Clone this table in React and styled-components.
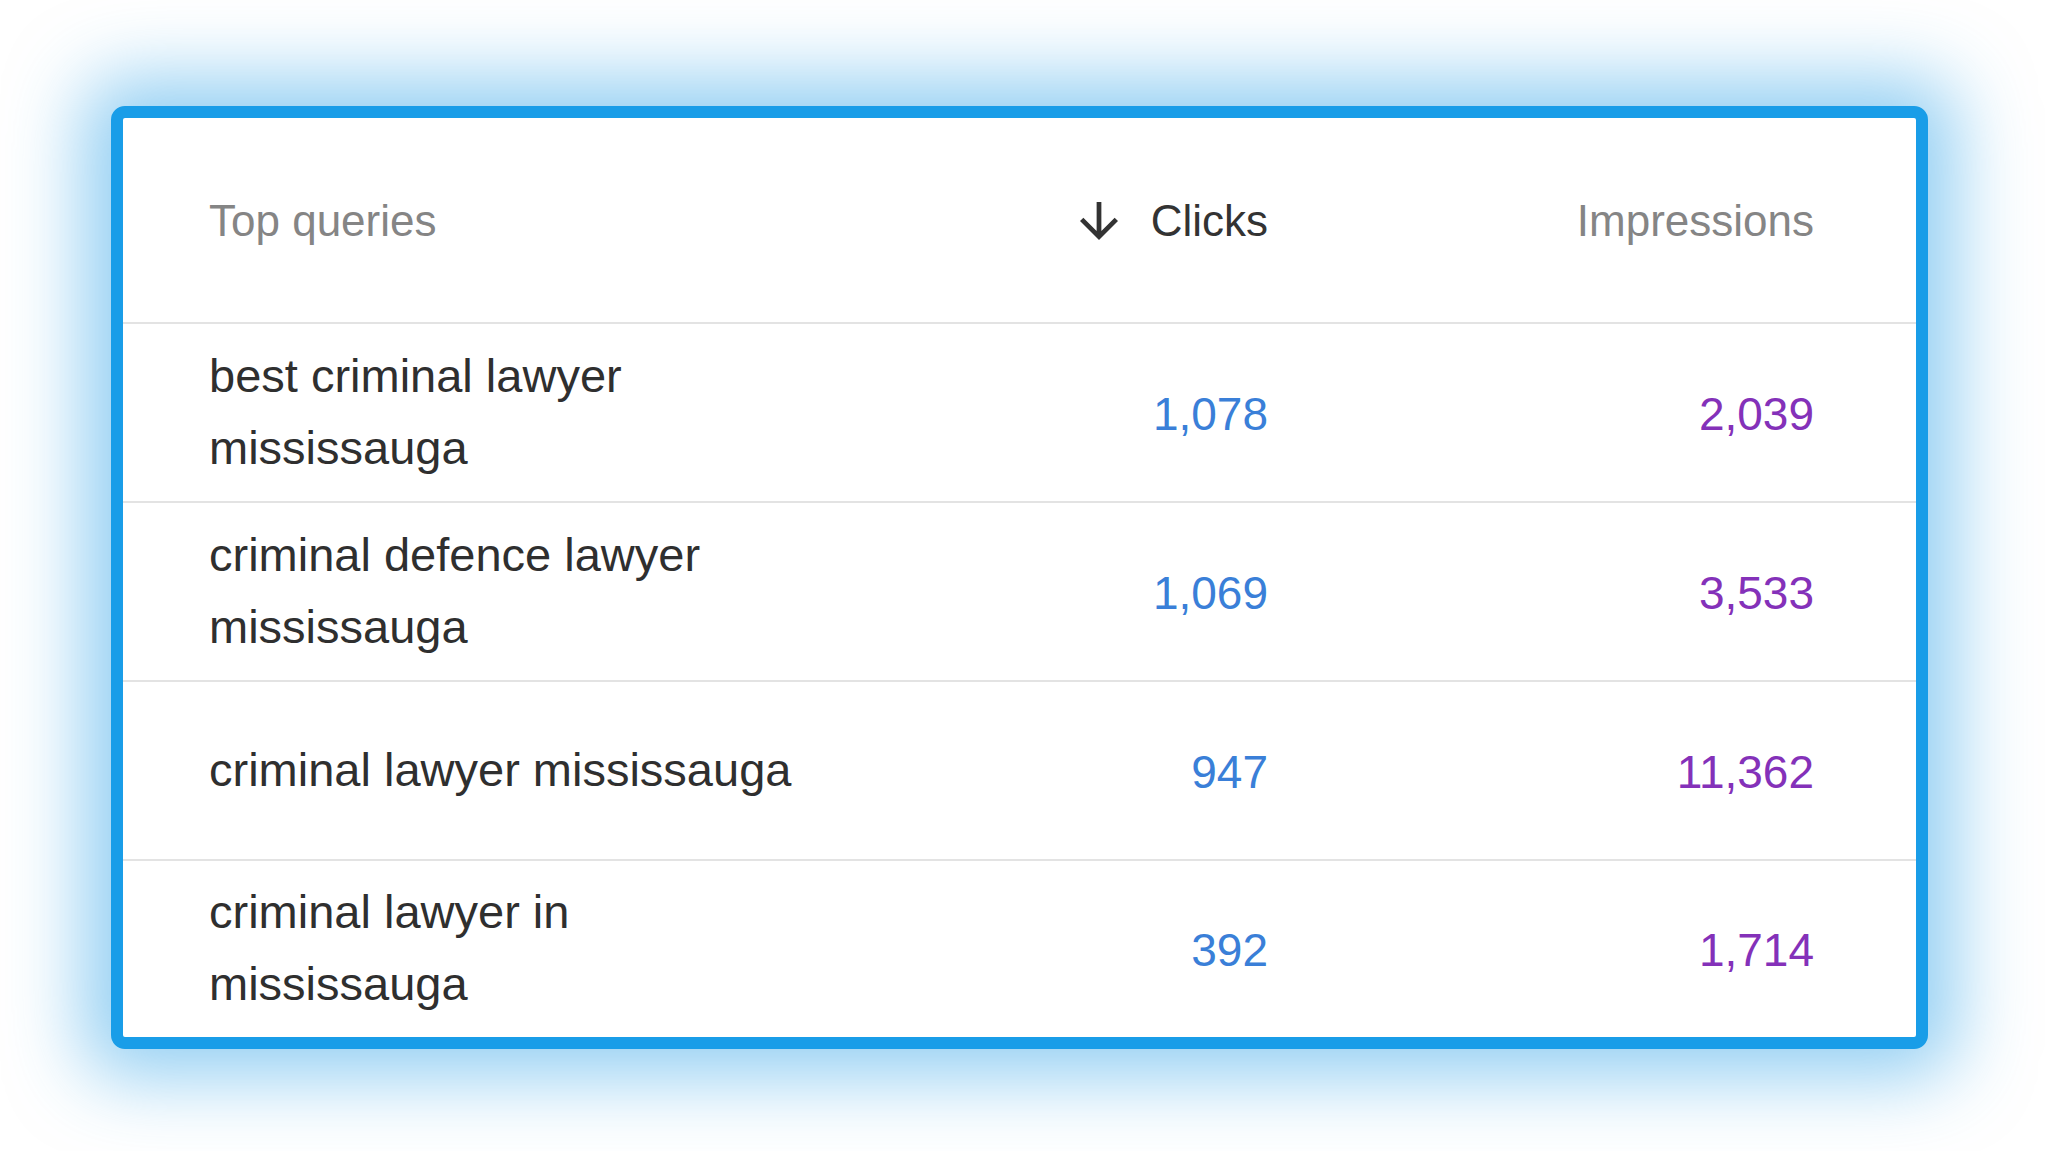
import React from "react";
import styled, { createGlobalStyle } from "styled-components";

const GlobalStyle = createGlobalStyle`
  html, body {
    margin: 0;
    padding: 0;
    background: #ffffff;
    font-family: "Liberation Sans", Arial, sans-serif;
  }
`;

const Page = styled.div`
  width: 2048px;
  height: 1151px;
  box-sizing: border-box;
  padding: 106px 120px 0 111px;
  background: #ffffff;
  overflow: hidden;
`;

const Card = styled.div`
  background: #ffffff;
  border: 12px solid #199de8;
  border-radius: 14px;
  box-shadow: 0 0 75px 28px rgba(40, 160, 232, 0.5);
  overflow: hidden;
`;

const Grid = styled.div`
  display: grid;
  grid-template-columns: 620px 1fr 546px;
  padding: 0 102px 0 86px;
`;

const HeaderRow = styled(Grid)`
  height: 204px;
  align-items: center;
  font-size: 44px;
  color: #858585;
`;

const HeadCell = styled.div`
  display: flex;
  align-items: center;
  justify-content: ${(p) => (p.$right ? "flex-end" : "flex-start")};
  gap: 33px;
  color: ${(p) => (p.$active ? "#333333" : "#858585")};
  padding-top: 2px;
`;

const Row = styled(Grid)`
  height: ${(p) => (p.$last ? "176px" : "177px")};
  border-top: 2px solid #e3e3e3;
  align-items: center;
`;

const Query = styled.div`
  font-size: 47px;
  line-height: 72px;
  color: #2f2f2f;
  padding-bottom: 2px;
`;

const Num = styled.div`
  text-align: right;
  font-size: 46px;
  color: ${(p) => (p.$kind === "clicks" ? "#3a7fd8" : "#8431b9")};
  padding-top: 2px;
`;

const SortArrow = () => (
  <svg width="38" height="39" viewBox="4 4 16 16.4" fill="#333333">
    <path d="M20 12l-1.41-1.41L13 16.17V4h-2v12.17l-5.58-5.59L4 12l8 8 8-8z" />
  </svg>
);

const rows = [
  { q: "best criminal lawyer mississauga", clicks: "1,078", imp: "2,039" },
  { q: "criminal defence lawyer mississauga", clicks: "1,069", imp: "3,533" },
  { q: "criminal lawyer mississauga", clicks: "947", imp: "11,362" },
  { q: "criminal lawyer in mississauga", clicks: "392", imp: "1,714" },
];

const App = () => (
  <>
    <GlobalStyle />
    <Page>
      <Card>
        <HeaderRow>
          <HeadCell>Top queries</HeadCell>
          <HeadCell $right $active>
            <SortArrow />
            Clicks
          </HeadCell>
          <HeadCell $right>Impressions</HeadCell>
        </HeaderRow>
        {rows.map((r, i) => (
          <Row key={r.q} $last={i === rows.length - 1}>
            <Query>{r.q}</Query>
            <Num $kind="clicks">{r.clicks}</Num>
            <Num $kind="imp">{r.imp}</Num>
          </Row>
        ))}
      </Card>
    </Page>
  </>
);

export default App;
